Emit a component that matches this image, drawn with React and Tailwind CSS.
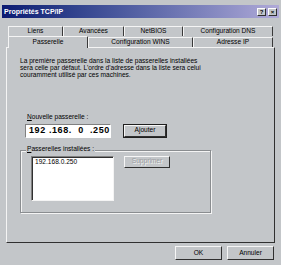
const font = { fontFamily: '"Liberation Sans", Arial, sans-serif' };

const Tab = ({ label, w, selected }) => (
  <div
    className={`flex items-center justify-center border-t border-l border-t-[#f4f4f4] border-l-[#f4f4f4] border-r border-r-[#3a3a3a] rounded-t-[1px] ${
      selected ? "h-[12px] -mb-px bg-[#c3c6c9] relative z-10" : "h-[10px]"
    }`}
    style={{ width: w }}
  >
    <span className="text-[6.6px] leading-none text-black">{label}</span>
  </div>
);

const Button = ({ label, w, h = 13, disabled, def }) => (
  <div
    className={`flex items-center justify-center bg-[#c3c6c9] border border-t-[#f6f6f6] border-l-[#f6f6f6] border-r-[#303030] border-b-[#303030] ${
      def ? "outline outline-1 outline-[#202020]" : ""
    }`}
    style={{ width: w, height: h }}
  >
    <span
      className={`text-[6.6px] leading-none ${
        disabled ? "text-[#9a9da0] [text-shadow:1px_1px_0_#f4f4f4]" : "text-black"
      }`}
    >
      {label}
    </span>
  </div>
);

const TitleButton = ({ children }) => (
  <span className="w-[9px] h-[8px] bg-[#c3c6c9] border border-t-white border-l-white border-r-[#303030] border-b-[#303030] flex items-center justify-center text-[6px] font-bold leading-none text-black">
    {children}
  </span>
);

export default function App() {
  return (
    <div className="w-[281px] h-[265px] bg-[#c3c6c9] flex flex-col pt-[5px] px-[2px]" style={font}>
      {/* Title bar */}
      <div className="h-[13px] bg-linear-to-r from-[#0c1a72] to-[#b0aad8] text-white text-[7px] font-bold leading-[13px] pl-[2px] pr-[2px] flex items-center justify-between">
        Propriétés TCP/IP
        <span className="flex gap-[2px]">
          <TitleButton>?</TitleButton>
          <TitleButton>×</TitleButton>
        </span>
      </div>

      {/* Tabs */}
      <div className="pl-[6px] pt-[8px] flex flex-col">
        <div className="flex">
          <Tab label="Liens" w={55} />
          <Tab label="Avancées" w={61} />
          <Tab label="NetBIOS" w={59} />
          <Tab label="Configuration DNS" w={90} />
        </div>
        <div className="flex items-end">
          <Tab label="Passerelle" w={80} selected />
          <Tab label="Configuration WINS" w={105} />
          <Tab label="Adresse IP" w={80} />
        </div>
      </div>

      {/* Panel */}
      <div className="ml-[4px] w-[269px] h-[196px] border border-t-[#f4f4f4] border-l-[#f4f4f4] border-r-[#303030] border-b-[#303030] flex flex-col pl-[13px] pt-[9px]">
        <p className="text-[6.6px] leading-[7px] text-black w-[200px]">
          La première passerelle dans la liste de passerelles installées
          <br />
          sera celle par défaut. L'ordre d'adresse dans la liste sera celui
          <br />
          couramment utilisé par ces machines.
        </p>

        <div className="mt-[36px] pl-[7px] text-[6.6px] leading-none text-black">
          <span className="underline">N</span>ouvelle passerelle :
        </div>
        <div className="mt-[3px] pl-[5px] flex items-center gap-[13px]">
          <div className="w-[86px] h-[14px] bg-white border border-t-[#808080] border-l-[#808080] border-r-white border-b-white flex items-center pl-[3px]">
            <span className="whitespace-pre text-[9px] font-bold leading-none tracking-[0.6px] text-black">
              192 .168.  0  .250
            </span>
          </div>
          <Button label="Ajouter" w={42} h={12} def />
        </div>

        <div className="mt-[12px] w-[191px] h-[63px] border border-[#8a8d90] shadow-[1px_1px_0_#f4f4f4,inset_1px_1px_0_#f4f4f4] relative flex items-start pl-[10px] pt-[5px] gap-[10px]">
          <div className="absolute -top-[5px] left-[5px] bg-[#c3c6c9] px-[1px] text-[6.6px] leading-none text-black">
            <span className="underline">P</span>asserelles installées :
          </div>
          <div className="w-[83px] h-[45px] bg-white border border-t-[#808080] border-l-[#808080] border-r-[#f4f4f4] border-b-[#f4f4f4] shadow-[inset_1px_1px_0_#303030] pl-[3px] pt-[2px] text-[6.6px] leading-none text-black">
            192.168.0.250
          </div>
          <Button label="Supprimer" w={46} h={12} disabled />
        </div>
      </div>

      {/* Bottom buttons */}
      <div className="flex justify-end gap-[5px] pr-[5px] pt-[3px]">
        <Button label="OK" w={47} h={14} />
        <Button label="Annuler" w={47} h={14} />
      </div>
    </div>
  );
}
